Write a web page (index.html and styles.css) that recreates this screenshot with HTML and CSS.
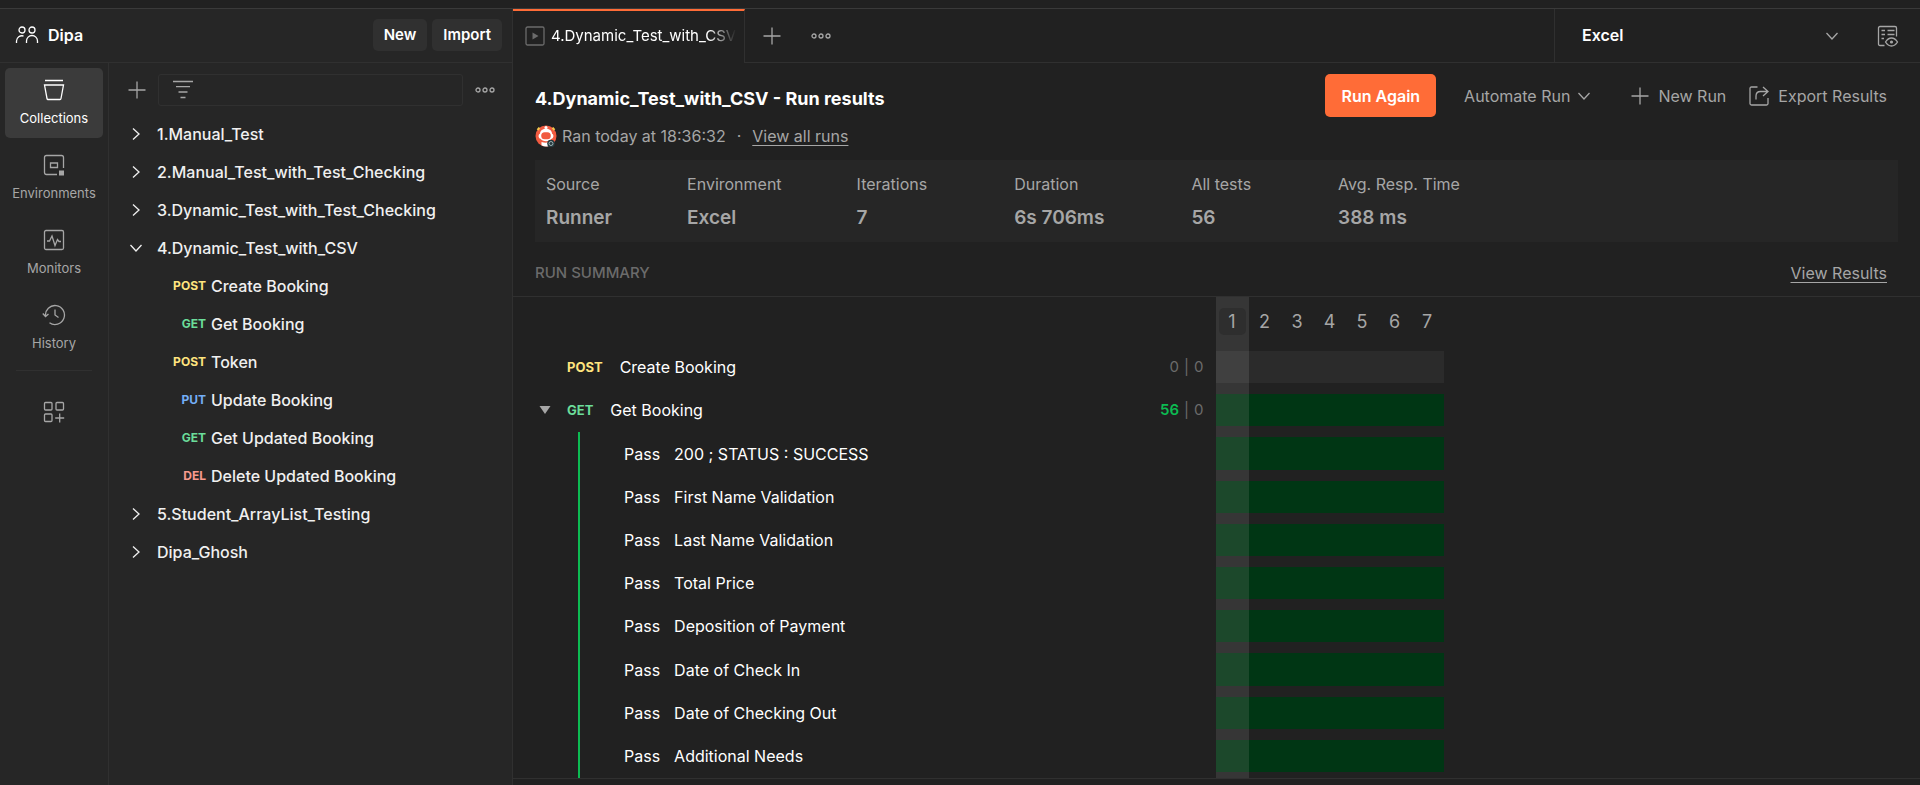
FILE: index.html
```html
<!DOCTYPE html>
<html lang="en">
<head>
<meta charset="utf-8">
<title>4.Dynamic_Test_with_CSV - Run results</title>
<link rel="stylesheet" href="styles.css">
</head>
<body>
<div class="app">
  <aside class="sidebar">
    <header class="workspace">
      <svg class="icon" width="24" height="20" viewBox="0 0 24 20"><circle cx="7" cy="5" r="3"/><circle cx="17" cy="5" r="3"/><path d="M1.500 18v-2a5.500 5.500 0 0 1 7-5M11.500 18v-2a5.500 5.500 0 0 1 11 0v2"/></svg>
      <h2 class="workspace-name">Dipa</h2>
      <button class="btn" type="button">New</button>
      <button class="btn" type="button">Import</button>
    </header>
    <div class="sidebar-body">
      <nav class="rail">
        <a class="rail-item active" href="#collections">
          <svg class="icon" width="22" height="22" viewBox="0 0 22 22"><path d="M2 1.500h18M1.500 6h19L18 19.500q-.2 1-1 1H5q-.8 0-1-1z"/></svg>
          <span>Collections</span>
        </a>
        <a class="rail-item" href="#environments">
          <svg class="icon" width="22" height="22" viewBox="0 0 22 22"><path d="M14 20.500H3.500q-2 0-2-2v-15q0-2 2-2h15q2 0 2 2V14M7.500 9h7v4.500h-7z"/><path class="solid" d="M16 16.500h5v5h-5z"/></svg>
          <span>Environments</span>
        </a>
        <a class="rail-item" href="#monitors">
          <svg class="icon" width="22" height="22" viewBox="0 0 22 22"><rect x="1.500" y="1.500" width="19" height="19" rx="1.500"/><path d="M4 12h2.500l2.500-5 3 9.500 2.500-6 1.500 2h2"/></svg>
          <span>Monitors</span>
        </a>
        <a class="rail-item" href="#history">
          <svg class="icon" width="24" height="22" viewBox="0 0 24 22"><path d="M3.500 12a9.500 9.500 0 1 1 4 6.800M.8 9.500l2.700 3 3-2.500M13 5.500V11l3.500 2.500"/></svg>
          <span>History</span>
        </a>
        <hr class="rail-divider">
        <button class="rail-more" type="button" aria-label="Configure sidebar">
          <svg class="icon" width="22" height="22" viewBox="0 0 22 22"><rect x="1.500" y="1.500" width="7.500" height="7.500" rx="1"/><rect x="13" y="1.500" width="7.500" height="7.500" rx="1"/><rect x="1.500" y="13" width="7.500" height="7.500" rx="1"/><path d="M16.700 12.500v9M12.200 17h9"/></svg>
        </button>
      </nav>
      <section class="collections">
        <div class="toolbar">
          <button class="icon-btn" type="button" aria-label="Create collection"><svg class="icon" width="18" height="18" viewBox="0 0 18 18"><path d="M9 .5v17M.5 9h17"/></svg></button>
          <label class="filter">
            <svg class="icon" width="20" height="20" viewBox="0 0 20 20"><path d="M0 1.500h20M3 6.700h14M5.500 12h9M7.500 17.500h5"/></svg>
            <input class="filter-input" type="text" aria-label="Filter collections">
          </label>
          <button class="icon-btn" type="button" aria-label="More actions"><svg class="icon" width="20" height="8" viewBox="0 0 20 8"><circle cx="3" cy="4" r="2"/><circle cx="10" cy="4" r="2"/><circle cx="17" cy="4" r="2"/></svg></button>
        </div>
        <ul class="tree">
          <li class="tree-row"><svg class="icon" width="14" height="14" viewBox="0 0 14 14"><path d="M4 1.500L10 7l-6 5.500"/></svg>1.Manual_Test</li>
          <li class="tree-row"><svg class="icon" width="14" height="14" viewBox="0 0 14 14"><path d="M4 1.500L10 7l-6 5.500"/></svg>2.Manual_Test_with_Test_Checking</li>
          <li class="tree-row"><svg class="icon" width="14" height="14" viewBox="0 0 14 14"><path d="M4 1.500L10 7l-6 5.500"/></svg>3.Dynamic_Test_with_Test_Checking</li>
          <li class="tree-row"><svg class="icon" width="14" height="14" viewBox="0 0 14 14"><path d="M1.500 4L7 10l5.500-6"/></svg>4.Dynamic_Test_with_CSV</li>
          <li class="tree-row request"><span class="method post">POST</span>Create Booking</li>
          <li class="tree-row request"><span class="method get">GET</span>Get Booking</li>
          <li class="tree-row request"><span class="method post">POST</span>Token</li>
          <li class="tree-row request"><span class="method put">PUT</span>Update Booking</li>
          <li class="tree-row request"><span class="method get">GET</span>Get Updated Booking</li>
          <li class="tree-row request"><span class="method del">DEL</span>Delete Updated Booking</li>
          <li class="tree-row"><svg class="icon" width="14" height="14" viewBox="0 0 14 14"><path d="M4 1.500L10 7l-6 5.500"/></svg>5.Student_ArrayList_Testing</li>
          <li class="tree-row"><svg class="icon" width="14" height="14" viewBox="0 0 14 14"><path d="M4 1.500L10 7l-6 5.500"/></svg>Dipa_Ghosh</li>
        </ul>
      </section>
    </div>
  </aside>

  <main class="main">
    <div class="tabs">
      <div class="tab">
        <svg class="icon tab-icon" width="20" height="20" viewBox="0 0 20 20"><rect x="1" y="1" width="18" height="18" rx="1.500"/><path class="solid" d="M7.500 6.500l6 3.500-6 3.500z"/></svg>
        <span class="tab-title">4.Dynamic_Test_with_CSV</span>
      </div>
      <div class="tab-actions">
        <button class="icon-btn" type="button" aria-label="New tab"><svg class="icon" width="18" height="18" viewBox="0 0 18 18"><path d="M9 .5v17M.5 9h17"/></svg></button>
        <button class="icon-btn" type="button" aria-label="Tab options"><svg class="icon" width="20" height="8" viewBox="0 0 20 8"><circle cx="3" cy="4" r="2"/><circle cx="10" cy="4" r="2"/><circle cx="17" cy="4" r="2"/></svg></button>
      </div>
      <div class="environment">
        <select class="environment-select" aria-label="Environment"><option>Excel</option></select>
        <svg class="icon" width="14" height="14" viewBox="0 0 14 14"><path d="M1.500 4L7 10l5.500-6"/></svg>
      </div>
      <button class="icon-btn quick-look" type="button" aria-label="Environment quick look"><svg class="icon" width="22" height="22" viewBox="0 0 22 22"><path d="M7.500 20.500H3q-1.500 0-1.500-1.500V3q0-1.500 1.500-1.500h15q1.500 0 1.500 1.500v8.500M4.500 5.500H8M10.500 5.500h7M4.500 9.500H8M10.500 9.500h7M4.500 13.500H7"/><path d="M8.500 17q2.500-4 6-4t6 4q-2.500 4-6 4t-6-4z"/><circle class="solid" cx="14.500" cy="17" r="1.600"/></svg></button>
    </div>

    <div class="run-head">
      <div class="run-info">
        <h1 class="run-title">4.Dynamic_Test_with_CSV - Run results</h1>
        <div class="run-meta">
          <svg width="22" height="22" viewBox="0 0 22 22"><circle cx="11" cy="11" r="10.500" fill="#f15a40"/><path d="M2.500 5l2-2.300M19.500 5l-2-2.300" stroke="#f5c84b" stroke-width="2"/><circle cx="11" cy="2.500" r="1.500" fill="#fff"/><path d="M11 3.800c4 0 6 2.500 6 5 2 .5 2 4.500-.5 5-1 1.500-3 2.400-5.500 2.400s-4.500-.9-5.500-2.400C3 13.300 3 9.300 5 8.800c0-2.500 2-5 6-5z" fill="#fff"/><rect x="6.200" y="7.200" width="9.600" height="7" rx="3.500" fill="#f15a40"/><path d="M6.500 17q4.500 1.500 7 0v4.200q-4 1-7-1z" fill="#fff"/><circle cx="16" cy="18.500" r="3.800" fill="#26383c"/><circle cx="16" cy="18.500" r="2" fill="none" stroke="#9bb0b3"/></svg>
          <span>Ran today at 18:36:32</span>
          <span class="dot">·</span>
          <a class="link" href="#runs">View all runs</a>
        </div>
      </div>
      <div class="run-actions">
        <button class="run-again" type="button">Run Again</button>
        <button class="action automate" type="button">Automate Run<svg class="icon" width="14" height="14" viewBox="0 0 14 14"><path d="M1.500 4L7 10l5.500-6"/></svg></button>
        <button class="action" type="button"><svg class="icon" width="18" height="18" viewBox="0 0 18 18"><path d="M9 .5v17M.5 9h17"/></svg>New Run</button>
        <button class="action" type="button"><svg class="icon" width="20" height="20" viewBox="0 0 20 20"><path d="M8.500 1H2.500Q1 1 1 2.500v15q0 1.500 1.500 1.500h15q1.500 0 1.500-1.500V12M7 13.500V10q0-4.500 4.500-4.500H19M14 1l5 4.500-5 4.500"/></svg>Export Results</button>
      </div>
    </div>

    <dl class="stats">
      <div><dt>Source</dt><dd>Runner</dd></div>
      <div><dt>Environment</dt><dd>Excel</dd></div>
      <div class="metric"><dt>Iterations</dt><dd>7</dd></div>
      <div class="metric"><dt>Duration</dt><dd>6s 706ms</dd></div>
      <div class="metric"><dt>All tests</dt><dd>56</dd></div>
      <div class="metric"><dt>Avg. Resp. Time</dt><dd>388 ms</dd></div>
    </dl>

    <div class="summary-head">
      <h2 class="summary-title">RUN SUMMARY</h2>
      <a class="link" href="#results">View Results</a>
    </div>

    <table class="summary">
      <thead>
        <tr><td></td><th class="current"><span class="badge">1</span></th><th>2</th><th>3</th><th>4</th><th>5</th><th>6</th><th>7</th></tr>
      </thead>
      <tbody>
        <tr class="skipped"><th class="request-cell"><span class="method post">POST</span><span class="name">Create Booking</span><span class="count"><span>0</span><span>|</span><span>0</span></span></th><td class="current"></td><td></td><td></td><td></td><td></td><td></td><td></td></tr>
        <tr><th class="request-cell"><svg class="caret" width="12" height="8" viewBox="0 0 12 8"><path d="M.5 0h11L6 8z"/></svg><span class="method get">GET</span><span class="name">Get Booking</span><span class="count"><b class="passed">56</b><span>|</span><span>0</span></span></th><td class="current"></td><td></td><td></td><td></td><td></td><td></td><td></td></tr>
        <tr><th class="test-cell"><span>Pass</span>200 ; STATUS : SUCCESS</th><td class="current"></td><td></td><td></td><td></td><td></td><td></td><td></td></tr>
        <tr><th class="test-cell"><span>Pass</span>First Name Validation</th><td class="current"></td><td></td><td></td><td></td><td></td><td></td><td></td></tr>
        <tr><th class="test-cell"><span>Pass</span>Last Name Validation</th><td class="current"></td><td></td><td></td><td></td><td></td><td></td><td></td></tr>
        <tr><th class="test-cell"><span>Pass</span>Total Price</th><td class="current"></td><td></td><td></td><td></td><td></td><td></td><td></td></tr>
        <tr><th class="test-cell"><span>Pass</span>Deposition of Payment</th><td class="current"></td><td></td><td></td><td></td><td></td><td></td><td></td></tr>
        <tr><th class="test-cell"><span>Pass</span>Date of Check In</th><td class="current"></td><td></td><td></td><td></td><td></td><td></td><td></td></tr>
        <tr><th class="test-cell"><span>Pass</span>Date of Checking Out</th><td class="current"></td><td></td><td></td><td></td><td></td><td></td><td></td></tr>
        <tr><th class="test-cell"><span>Pass</span>Additional Needs</th><td class="current"></td><td></td><td></td><td></td><td></td><td></td><td></td></tr>
      </tbody>
    </table>
  </main>
</div>
</body>
</html>
```
FILE: styles.css
```css
:root {
  --bg: #212121;
  --panel: #262626;
  --line: #303030;
  --text: #fff;
  --muted: #a6a6a6;
  --faint: #6b6b6b;
}

* { box-sizing: border-box; }

body {
  margin: 0;
  background: var(--bg);
  color: var(--text);
  font: 16px/20px Inter, "Liberation Sans", sans-serif;
}

h1, h2, dl, dd, ul { margin: 0; padding: 0; }

button, input, select {
  margin: 0;
  padding: 0;
  border: 0;
  background: none;
  color: inherit;
  font: inherit;
  outline: none;
}

.icon { flex: none; fill: none; stroke: currentColor; stroke-width: 1.3; }
.icon .solid { fill: currentColor; stroke: none; }

.app {
  display: flex;
  min-height: 100vh;
  border-top: 8px solid var(--bg);
}

/* Sidebar */
.sidebar {
  flex: none;
  display: flex;
  flex-direction: column;
  width: 513px;
  border-top: 1px solid #3a3a3a;
  border-right: 1px solid var(--line);
  background: var(--panel);
}

.workspace {
  display: flex;
  align-items: center;
  gap: 5px;
  height: 54px;
  padding: 0 10px 2px 15px;
  border-bottom: 1px solid var(--line);
}
.workspace-name { flex: 1; padding-left: 4px; font-size: 16px; font-weight: 600; }
.btn {
  height: 32px;
  padding: 0 11px;
  border-radius: 5px;
  background: #303030;
  font-size: 15px;
  font-weight: 600;
}

.sidebar-body { flex: 1; display: flex; }

.rail {
  display: flex;
  flex-direction: column;
  gap: 5px;
  width: 109px;
  padding: 5px;
  border-right: 1px solid var(--line);
}
.rail-item {
  display: flex;
  flex-direction: column;
  align-items: center;
  gap: 8px;
  height: 70px;
  padding-top: 11px;
  border-radius: 5px;
  color: var(--muted);
  font-size: 13px;
  line-height: 18px;
  text-decoration: none;
}
.rail-item.active { background: #3b3b3b; color: var(--text); }
.rail-divider { width: 76px; height: 1px; margin: 2px auto; border: 0; background: var(--line); }
.rail-more { align-self: center; margin-top: 23px; color: var(--muted); }

.collections { flex: 1; min-width: 0; }
.toolbar {
  display: flex;
  align-items: center;
  gap: 12px;
  padding: 11px 17px 9px 19px;
  color: var(--muted);
}
.icon-btn { display: flex; color: var(--muted); }
.filter {
  flex: 1;
  display: flex;
  align-items: center;
  height: 32px;
  padding-left: 14px;
  border: 1px solid var(--line);
  border-radius: 3px;
}
.filter-input { flex: 1; min-width: 0; padding: 0 10px; }

.tree { list-style: none; }
.tree-row {
  display: flex;
  align-items: center;
  gap: 14px;
  height: 38px;
  padding-left: 20px;
  color: #f0f0f0;
  font-weight: 500;
}
.tree-row.request { gap: 5px; }
.tree-row .method { width: 77px; font-size: 12px; text-align: right; }

.method { font-size: 13px; font-weight: 700; }
.post { color: #ffe47e; }
.get { color: #6bdd9a; }
.put { color: #74aef6; }
.del { color: #f79a8e; }

/* Main area */
.main {
  flex: 1;
  min-width: 0;
  display: flex;
  flex-direction: column;
  border-top: 1px solid #3a3a3a;
}
.tabs { display: flex; height: 54px; }
.tab {
  display: flex;
  align-items: center;
  gap: 6px;
  width: 232px;
  padding: 0 8px 3px 12px;
  border-top: 2px solid #ff6c37;
  border-right: 1px solid var(--line);
}
.tab-icon { color: var(--faint); }
.tab-title {
  font-size: 15px;
  white-space: nowrap;
  -webkit-mask-image: linear-gradient(to right, #000 85%, transparent);
  mask-image: linear-gradient(to right, #000 85%, transparent);
}
.tab-actions {
  flex: 1;
  display: flex;
  align-items: center;
  gap: 30px;
  padding-left: 18px;
  border-bottom: 1px solid var(--line);
}
.environment {
  display: flex;
  align-items: center;
  width: 285px;
  border-left: 1px solid var(--line);
  border-bottom: 1px solid var(--line);
  padding-left: 27px;
  color: var(--muted);
}
.environment-select {
  flex: 1;
  appearance: none;
  padding-bottom: 2px;
  color: var(--text);
  font-weight: 600;
}
.quick-look {
  align-items: center;
  padding: 0 21px 0 38px;
  border-bottom: 1px solid var(--line);
}

.run-head { display: flex; justify-content: space-between; padding: 11px 33px 0 22px; }
.run-title { padding-top: 13px; font-size: 18px; line-height: 24px; font-weight: 700; }
.run-meta {
  display: flex;
  align-items: center;
  gap: 5px;
  padding-top: 14px;
  color: var(--muted);
}
.dot { padding: 0 6px; }
.link { color: var(--muted); text-underline-offset: 3px; }
.run-actions { display: flex; height: 43px; align-items: center; gap: 23px; }
.run-again {
  height: 43px;
  padding: 0 16px;
  border-radius: 5px;
  background: #ff6c37;
  font-weight: 600;
}
.action { display: flex; align-items: center; gap: 9px; color: var(--muted); }
.automate { gap: 7px; padding: 0 17px 0 5px; }

.stats {
  display: flex;
  gap: 75px;
  margin: 13px 22px 0;
  padding: 14px 11px 12px;
  background: var(--panel);
  color: var(--muted);
}
.stats .metric { padding-right: 12px; }
.stats dd { padding-top: 12px; font-size: 19px; line-height: 24px; font-weight: 600; }

.summary-head {
  display: flex;
  align-items: center;
  justify-content: space-between;
  height: 55px;
  padding: 8px 33px 0 22px;
  border-bottom: 1px solid var(--line);
}
.summary-title { color: var(--faint); font-size: 15px; font-weight: 500; }

.summary {
  flex: 1;
  display: flex;
  flex-direction: column;
  margin-bottom: 6px;
  border-bottom: 1px solid var(--line);
}
.summary th { padding: 0; font-weight: 400; text-align: left; }
.summary td { padding: 0; }
.summary tr { display: grid; grid-template-columns: calc(50% - 1px) 33px repeat(3, 32px 33px); }
.summary thead tr { height: 49px; }
.summary thead th {
  display: flex;
  align-items: center;
  justify-content: center;
  color: var(--muted);
  font-size: 18px;
}
.badge {
  width: 27px;
  border-radius: 5px;
  background: #2e2e2e;
  line-height: 27px;
  text-align: center;
}
.summary .current { background: #363636; }
.summary tbody { flex: 1; display: flex; flex-direction: column; }
.summary tbody tr { flex: 1 0 38px; }
.summary tbody td { display: flex; padding: 5px 0 6px; }
.summary tbody td::before { content: ""; flex: 1; background: #003614; }
.summary tbody .current::before { background: #1c482b; }
.summary .skipped td::before { background: #2b2b2b; }
.summary .skipped .current::before { background: #404040; }

.summary .request-cell { display: flex; align-items: center; padding: 0 12px 2px 54px; }
.request-cell .name { flex: 1; padding-left: 17px; }
.request-cell .caret { margin: 0 16px 0 -28px; fill: var(--muted); }
.count { display: flex; gap: 5px; color: var(--faint); font-size: 15px; }
.count .passed { color: #0cbb52; font-weight: 600; }
.summary .test-cell {
  display: flex;
  align-items: center;
  gap: 14px;
  margin-left: 65px;
  padding: 0 0 1px 44px;
  border-left: 2px solid #0cbb52;
}
```
